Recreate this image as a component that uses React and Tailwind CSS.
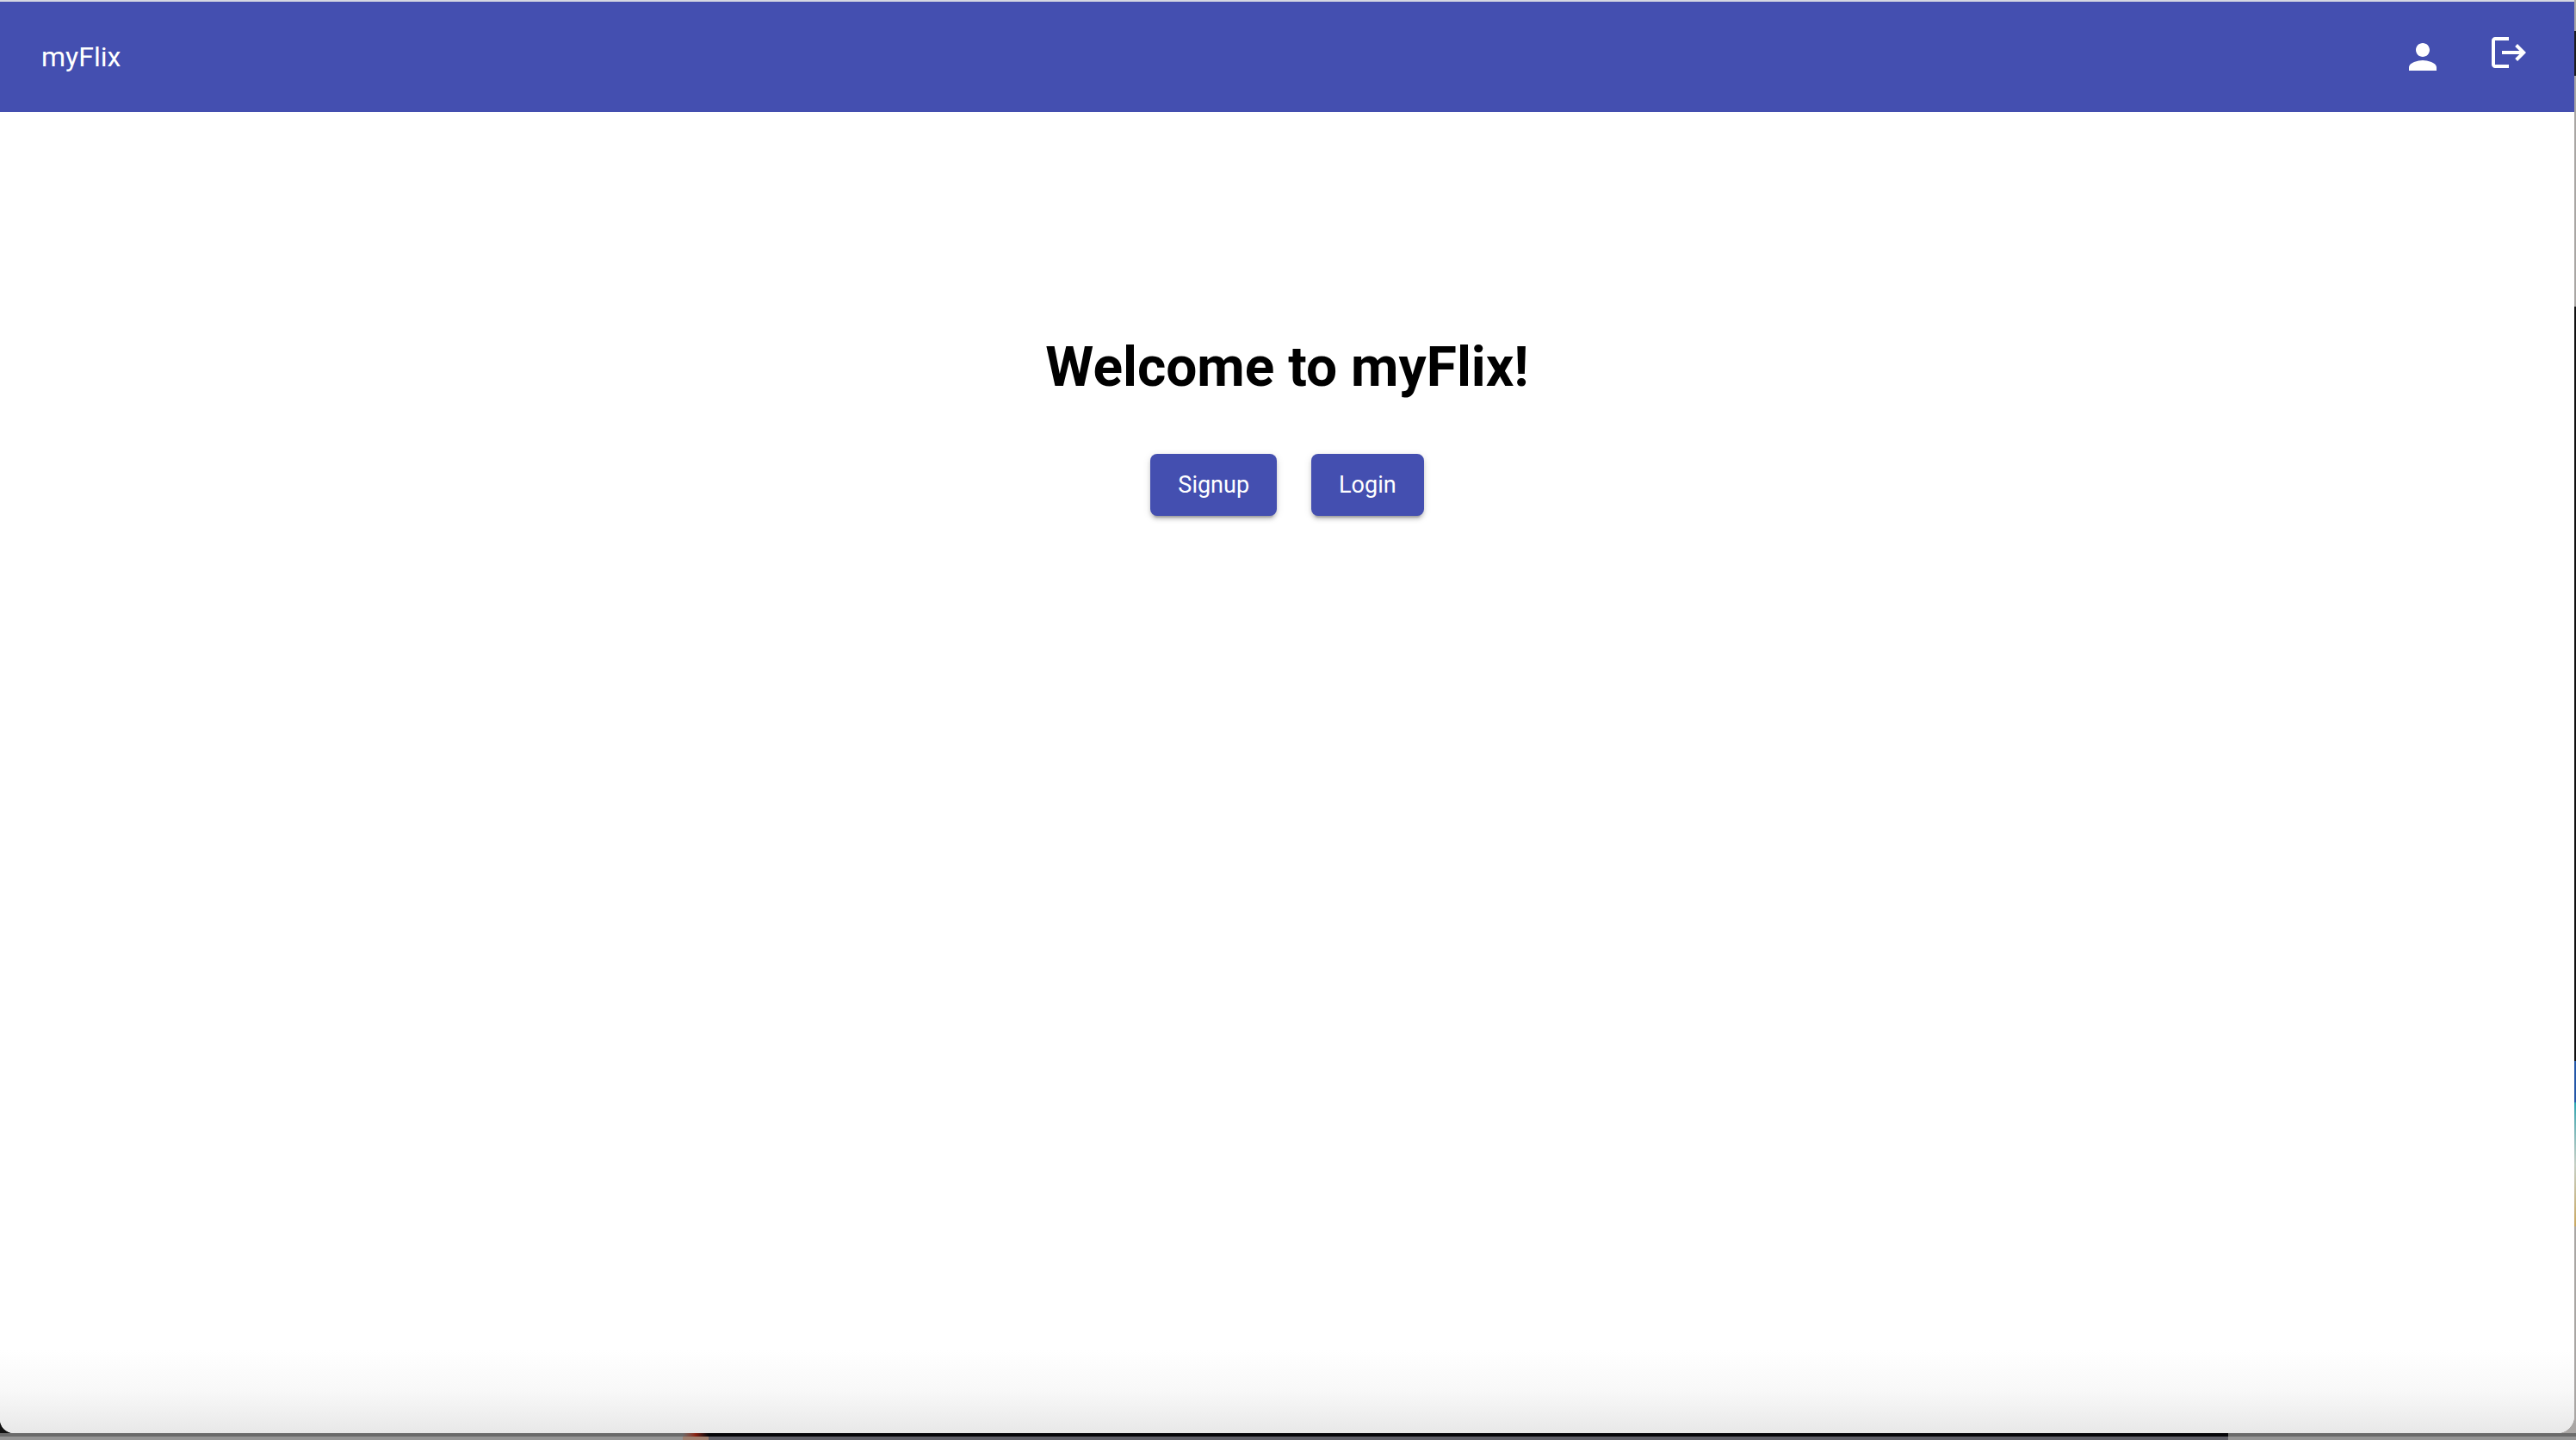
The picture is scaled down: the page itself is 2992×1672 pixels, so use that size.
import React from "react";

function PersonIcon() {
  return (
    <svg viewBox="0 0 24 24" className="size-12" fill="currentColor" aria-hidden="true">
      <path d="M12 12c2.21 0 4-1.79 4-4s-1.79-4-4-4-4 1.79-4 4 1.79 4 4 4zm0 2c-2.67 0-8 1.34-8 4v2h16v-2c0-2.66-5.33-4-8-4z" />
    </svg>
  );
}

function LogoutIcon() {
  return (
    <svg viewBox="0 0 48 48" className="size-12" fill="currentColor" aria-hidden="true">
      <path d="M8 42q-1.600 0-2.800-1.200Q4 39.600 4 38V10q0-1.600 1.200-2.800Q6.400 6 8 6h16v4H8v28h16v4ZM34 34l-2.800-2.900 5.100-5.100H16v-4h20.300l-5.100-5.100L34 14l10 10Z" />
    </svg>
  );
}

function ActionButton({ children }) {
  return (
    <button
      type="button"
      className="h-18 rounded-lg bg-[#444fb0] px-8 text-[27px] leading-9 text-white shadow-[0_6px_2px_-4px_rgba(0,0,0,0.2),0_4px_4px_0_rgba(0,0,0,0.14),0_2px_10px_0_rgba(0,0,0,0.12)]"
    >
      {children}
    </button>
  );
}

export default function App() {
  return (
    <div className="flex min-h-screen flex-col font-['Roboto',sans-serif]">
      <div className="flex flex-1 bg-linear-to-r from-[#111111] from-50% to-[#a9a6a4] to-50%">
        <div className="flex flex-1 flex-col overflow-hidden rounded-br-[20px] rounded-bl-2xl bg-white">
          <header className="flex h-[130px] items-center justify-between border-t-2 border-[#d5d7e2] bg-[#444fb0] pr-13 pl-12 text-white">
            <a href="#home" className="text-[32px] leading-10">
              myFlix
            </a>
            <nav className="flex items-center gap-13">
              <button type="button" aria-label="Profile">
                <PersonIcon />
              </button>
              <button type="button" aria-label="Log out" className="pb-2.5">
                <LogoutIcon />
              </button>
            </nav>
          </header>
          <main className="flex flex-1 flex-col items-center pt-[259px]">
            <h1 className="text-[64px] leading-19 font-bold text-black">Welcome to myFlix!</h1>
            <div className="mt-[62px] flex gap-10">
              <ActionButton>Signup</ActionButton>
              <ActionButton>Login</ActionButton>
            </div>
          </main>
          <div className="h-24 bg-linear-to-b from-white via-[#f8f8f8] to-[#e8e8e8]" />
        </div>
        <div className="flex w-0.5 flex-col">
          <div className="h-9 bg-[#a9a6a4]" />
          <div className="h-13 bg-[#1c1c1c]" />
          <div className="h-67 bg-[#a9a6a4]" />
          <div className="flex-1 bg-[#111111]" />
          <div className="h-12 bg-[#2457a8]" />
          <div className="h-36 bg-linear-to-b from-[#20a5b0] via-[#c5cfc5] to-[#c9a860]" />
          <div className="h-60 bg-[#a9a6a4]" />
        </div>
      </div>
      <div className="flex h-2">
        <div className="w-[26.5%] border-b-4 border-[#959595] bg-[#6a6a6a]" />
        <div className="w-[1%] border-b-4 border-[#a08070] bg-linear-to-r from-[#6a6a6a] via-[#8a2010] to-[#050508]" />
        <div className="w-[59%] border-b-4 border-[#606068] bg-[#050508]" />
        <div className="flex-1 border-b-4 border-[#959595] bg-[#6a6a6a]" />
      </div>
    </div>
  );
}
